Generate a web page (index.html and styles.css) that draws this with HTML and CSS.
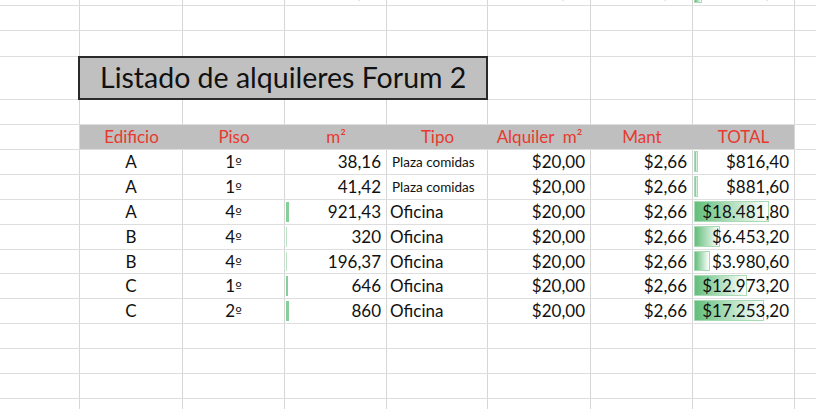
FILE: index.html
```html
<!DOCTYPE html>
<html lang="es">
<head>
<meta charset="utf-8">
<title>Listado de alquileres Forum 2</title>
<link rel="stylesheet" href="styles.css">
</head>
<body>
<div class="sheet">
  <div class="row r-top">
    <div class="c"></div>
    <div class="c ctr">A</div>
    <div class="c ctr">1<span class="ord">º</span></div>
    <div class="c num"><span class="v">41,42</span></div>
    <div class="c txt small">Plaza comidas</div>
    <div class="c num"><span class="v">$20,00</span></div>
    <div class="c num"><span class="v">$2,66</span></div>
    <div class="c num"><span class="gbar" style="width:8px"></span><span class="v">$1.000,00</span></div>
    <div class="c last"></div>
  </div>
  <div class="row r25">
    <div class="c"></div><div class="c"></div><div class="c"></div><div class="c"></div><div class="c"></div><div class="c"></div><div class="c"></div><div class="c"></div><div class="c last"></div>
  </div>
  <div class="row r26">
    <div class="c"></div><div class="c"></div><div class="c"></div><div class="c"></div><div class="c"></div><div class="c"></div><div class="c"></div><div class="c"></div><div class="c last"></div>
  </div>
  <div class="row r-title">
    <div class="c"></div>
    <div class="title">Listado de alquileres Forum 2</div>
    <div class="c"></div><div class="c"></div><div class="c"></div><div class="c last"></div>
  </div>
  <div class="row r25">
    <div class="c"></div><div class="c"></div><div class="c"></div><div class="c"></div><div class="c"></div><div class="c"></div><div class="c"></div><div class="c"></div><div class="c last"></div>
  </div>
  <div class="row r25 head">
    <div class="c"></div>
    <div class="h">Edificio</div>
    <div class="h">Piso</div>
    <div class="h">m²</div>
    <div class="h">Tipo</div>
    <div class="h">Alquiler&nbsp; m²</div>
    <div class="h">Mant</div>
    <div class="h hl">TOTAL</div>
    <div class="c last"></div>
  </div>

  <div class="row r25">
    <div class="c"></div>
    <div class="c ctr">A</div>
    <div class="c ctr">1<span class="ord">º</span></div>
    <div class="c num"><span class="v">38,16</span></div>
    <div class="c txt small">Plaza comidas</div>
    <div class="c num"><span class="v">$20,00</span></div>
    <div class="c num"><span class="v">$2,66</span></div>
    <div class="c num"><span class="gbar" style="width:4px"></span><span class="v">$816,40</span></div>
    <div class="c last"></div>
  </div>
  <div class="row r25">
    <div class="c"></div>
    <div class="c ctr">A</div>
    <div class="c ctr">1<span class="ord">º</span></div>
    <div class="c num"><span class="v">41,42</span></div>
    <div class="c txt small">Plaza comidas</div>
    <div class="c num"><span class="v">$20,00</span></div>
    <div class="c num"><span class="v">$2,66</span></div>
    <div class="c num"><span class="gbar" style="width:4px"></span><span class="v">$881,60</span></div>
    <div class="c last"></div>
  </div>
  <div class="row r25">
    <div class="c"></div>
    <div class="c ctr">A</div>
    <div class="c ctr">4<span class="ord">º</span></div>
    <div class="c num"><span class="mbar" style="width:3px"></span><span class="v">921,43</span></div>
    <div class="c txt">Oficina</div>
    <div class="c num"><span class="v">$20,00</span></div>
    <div class="c num"><span class="v">$2,66</span></div>
    <div class="c num"><span class="gbar" style="width:75px"></span><span class="v">$18.481,80</span></div>
    <div class="c last"></div>
  </div>
  <div class="row r25">
    <div class="c"></div>
    <div class="c ctr">B</div>
    <div class="c ctr">4<span class="ord">º</span></div>
    <div class="c num"><span class="mbar thin" style="width:1px"></span><span class="v">320</span></div>
    <div class="c txt">Oficina</div>
    <div class="c num"><span class="v">$20,00</span></div>
    <div class="c num"><span class="v">$2,66</span></div>
    <div class="c num"><span class="gbar" style="width:26px"></span><span class="v">$6.453,20</span></div>
    <div class="c last"></div>
  </div>
  <div class="row r24">
    <div class="c"></div>
    <div class="c ctr">B</div>
    <div class="c ctr">4<span class="ord">º</span></div>
    <div class="c num"><span class="mbar thin" style="width:1px"></span><span class="v">196,37</span></div>
    <div class="c txt">Oficina</div>
    <div class="c num"><span class="v">$20,00</span></div>
    <div class="c num"><span class="v">$2,66</span></div>
    <div class="c num"><span class="gbar" style="width:16px"></span><span class="v">$3.980,60</span></div>
    <div class="c last"></div>
  </div>
  <div class="row r25">
    <div class="c"></div>
    <div class="c ctr">C</div>
    <div class="c ctr">1<span class="ord">º</span></div>
    <div class="c num"><span class="mbar" style="width:2px"></span><span class="v">646</span></div>
    <div class="c txt">Oficina</div>
    <div class="c num"><span class="v">$20,00</span></div>
    <div class="c num"><span class="v">$2,66</span></div>
    <div class="c num"><span class="gbar" style="width:53px"></span><span class="v">$12.973,20</span></div>
    <div class="c last"></div>
  </div>
  <div class="row r25">
    <div class="c"></div>
    <div class="c ctr">C</div>
    <div class="c ctr">2<span class="ord">º</span></div>
    <div class="c num"><span class="mbar" style="width:3px"></span><span class="v">860</span></div>
    <div class="c txt">Oficina</div>
    <div class="c num"><span class="v">$20,00</span></div>
    <div class="c num"><span class="v">$2,66</span></div>
    <div class="c num"><span class="gbar" style="width:70px"></span><span class="v">$17.253,20</span></div>
    <div class="c last"></div>
  </div>
  <div class="row r25">
    <div class="c"></div><div class="c"></div><div class="c"></div><div class="c"></div><div class="c"></div><div class="c"></div><div class="c"></div><div class="c"></div><div class="c last"></div>
  </div>
  <div class="row r25">
    <div class="c"></div><div class="c"></div><div class="c"></div><div class="c"></div><div class="c"></div><div class="c"></div><div class="c"></div><div class="c"></div><div class="c last"></div>
  </div>
  <div class="row r25">
    <div class="c"></div><div class="c"></div><div class="c"></div><div class="c"></div><div class="c"></div><div class="c"></div><div class="c"></div><div class="c"></div><div class="c last"></div>
  </div>
  <div class="row r25">
    <div class="c"></div><div class="c"></div><div class="c"></div><div class="c"></div><div class="c"></div><div class="c"></div><div class="c"></div><div class="c"></div><div class="c last"></div>
  </div>
</div>
</body>
</html>
```

FILE: styles.css
```css
html, body {
  margin: 0;
  padding: 0;
  background: #ffffff;
  overflow: hidden;
}

.sheet {
  margin-top: -20px;
  font-family: Lato, "Liberation Sans", sans-serif;
  font-size: 17px;
  color: #111111;
}

.row {
  display: grid;
  grid-template-columns: 80px 103px 102px 102px 101px 103px 102px 102px 1fr;
  box-sizing: border-box;
  border-bottom: 1px solid #dedede;
}

.r-top { height: 26px; }
.r25 { height: 25px; }
.r24 { height: 24px; }
.r26 { height: 26px; }
.r-title { height: 43px; }

.c {
  position: relative;
  box-sizing: border-box;
  border-right: 1px solid #d6d6d6;
  line-height: 24px;
  white-space: nowrap;
  overflow: hidden;
}

.c.last { border-right: none; }

.ctr { text-align: center; }

.ord {
  font-family: "DejaVu Sans", sans-serif;
  font-size: 14px;
}

.num {
  text-align: right;
  padding-right: 5px;
}

.num .v {
  position: relative;
  z-index: 1;
}

.txt {
  text-align: left;
  padding-left: 3px;
}

.txt.small {
  font-size: 13.5px;
  padding-left: 5px;
}

.title {
  grid-column: span 4;
  box-sizing: border-box;
  margin-left: -2px;
  margin-top: -1px;
  height: 44px;
  background: #c0c0c0;
  border: 2px solid #2a2a2a;
  font-size: 28.5px;
  line-height: 39px;
  padding-left: 20px;
  color: #111111;
  white-space: nowrap;
  position: relative;
  z-index: 1;
}

.head .h {
  background: #bfbfbf;
  color: #e8392e;
  text-align: center;
  line-height: 24px;
  white-space: nowrap;
}

.head .hl {
  border-right: 1px solid #d6d6d6;
}

.mbar {
  position: absolute;
  left: 1px;
  top: 2px;
  bottom: 2px;
  background: #86cf98;
}

.mbar.thin {
  background: #b7e3c2;
}

.gbar {
  position: absolute;
  left: 1px;
  top: 1px;
  bottom: 2px;
  box-sizing: border-box;
  border: 1px solid #a8dbb5;
  background: linear-gradient(to right, #63be7b, #ffffff);
}
```
